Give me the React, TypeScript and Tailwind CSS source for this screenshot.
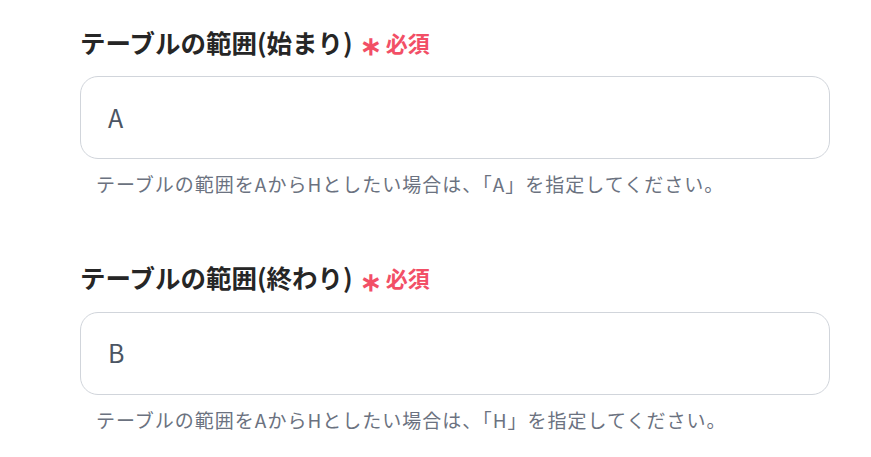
const Field = ({ label, value, help }: { label: string; value: string; help: string }) => {
  return (
    <div className="flex flex-col">
      <div className="flex items-center h-[28px]">
        <span className="text-[25.5px] font-bold text-[#262626]">{label}</span>
        <span className="ml-[7px] text-[26px] font-bold text-[#f24f66] leading-none mt-[4px]">∗</span>
        <span className="ml-[4px] text-[22px] font-bold text-[#f24f66]">必須</span>
      </div>
      <div className="mt-[20px] h-[83px] w-[750px] rounded-[18px] border border-[#d1d5db] bg-white flex items-center px-[27px]">
        <span className="text-[25px] text-[#4b5563]">{value}</span>
      </div>
      <p className="mt-[11px] ml-[16px] text-[19px] tracking-[1px] text-[#6b7280]">{help}</p>
    </div>
  );
};

export default function App() {
  return (
    <div
      className="w-[871px] h-[457px] bg-white pl-[80px] pt-[28px] flex flex-col gap-[65px]"
      style={{ fontFamily: '"Noto Sans CJK JP", "Noto Sans", sans-serif' }}
    >
      <Field
        label="テーブルの範囲(始まり)"
        value="A"
        help="テーブルの範囲をAからHとしたい場合は、「A」を指定してください。"
      />
      <Field
        label="テーブルの範囲(終わり)"
        value="B"
        help="テーブルの範囲をAからHとしたい場合は、「H」を指定してください。"
      />
    </div>
  );
}
